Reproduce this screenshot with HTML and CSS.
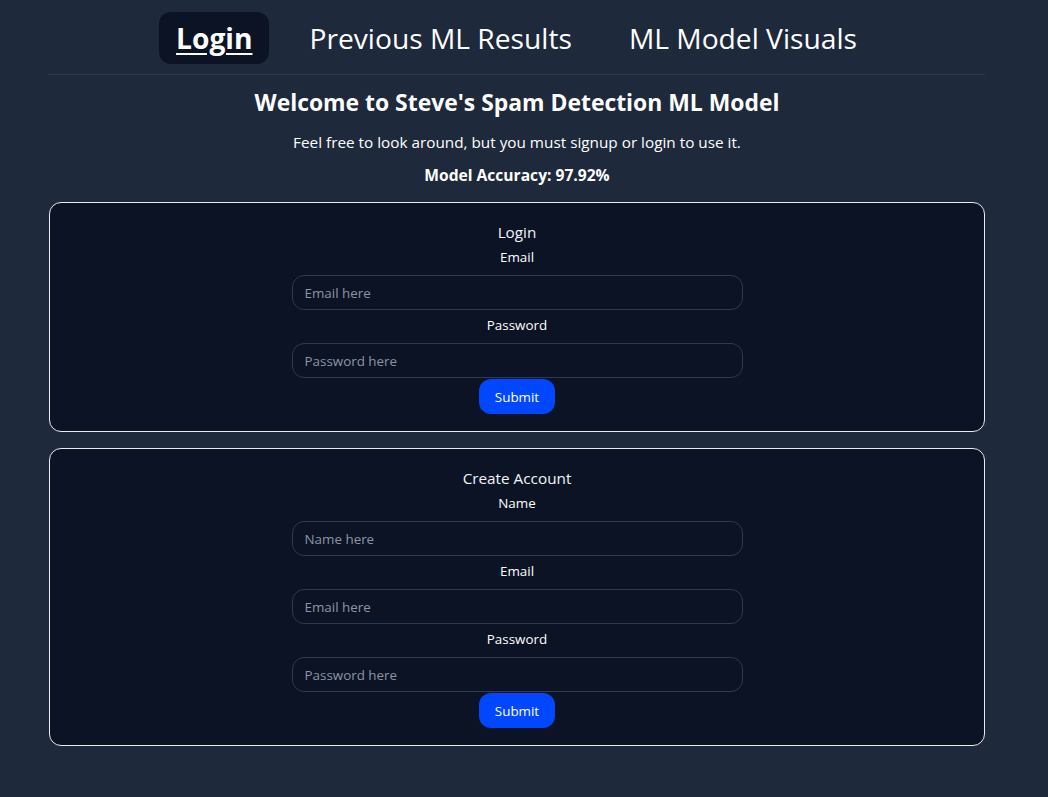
FILE: index.html
```html
<!DOCTYPE html>
<html lang="en">
<head>
<meta charset="utf-8">
<title>Steve's Spam Detection ML Model</title>
<link rel="stylesheet" href="styles.css">
</head>
<body>
<div class="page">
  <nav class="nav">
    <a class="nav-item active" href="#">Login</a>
    <a class="nav-item" href="#">Previous ML Results</a>
    <a class="nav-item" href="#">ML Model Visuals</a>
  </nav>
  <header class="intro">
    <h1 class="title">Welcome to Steve's Spam Detection ML Model</h1>
    <p class="subtitle">Feel free to look around, but you must signup or login to use it.</p>
    <p class="accuracy">Model Accuracy: 97.92%</p>
  </header>
  <section class="card">
    <h2 class="card-title">Login</h2>
    <div class="field">
      <label class="label">Email</label>
      <input class="input" type="text" placeholder="Email here">
    </div>
    <div class="field">
      <label class="label">Password</label>
      <input class="input" type="password" placeholder="Password here">
    </div>
    <button class="submit">Submit</button>
  </section>
  <section class="card">
    <h2 class="card-title">Create Account</h2>
    <div class="field">
      <label class="label">Name</label>
      <input class="input" type="text" placeholder="Name here">
    </div>
    <div class="field">
      <label class="label">Email</label>
      <input class="input" type="text" placeholder="Email here">
    </div>
    <div class="field">
      <label class="label">Password</label>
      <input class="input" type="password" placeholder="Password here">
    </div>
    <button class="submit">Submit</button>
  </section>
</div>
</body>
</html>
```
FILE: styles.css
```css
html, body {
  margin: 0;
  padding: 0;
}
body {
  background: #1e293b;
  color: #ffffff;
  font-family: "Open Sans", "Noto Sans", sans-serif;
}
.page {
  margin: 0 63px 0 49px;
}
.nav {
  display: flex;
  justify-content: center;
  gap: 23px;
  margin-left: -1px;
  padding: 12px 0 10px;
  border-bottom: 1px solid #2b3850;
}
.nav-item {
  display: block;
  padding: 8px 17px;
  font-size: 28.2px;
  line-height: 36px;
  color: #ffffff;
  text-decoration: none;
  border-radius: 12px;
}
.nav-item.active {
  background: #0c1324;
  font-weight: 700;
  text-decoration: underline;
  text-underline-offset: 4px;
  text-decoration-thickness: 2px;
}
.intro {
  text-align: center;
}
.title {
  margin: 12px 0 0;
  font-size: 22.9px;
  line-height: 32px;
  font-weight: 700;
}
.subtitle {
  margin: 11px 0 0;
  font-size: 15.3px;
  line-height: 24px;
}
.accuracy {
  margin: 9px 0 0;
  font-size: 15.6px;
  line-height: 24px;
  font-weight: 700;
}
.card {
  margin-top: 15px;
  background: #0c1324;
  border: 1px solid #e8ebf0;
  border-radius: 12px;
  padding: 17px 0 17px;
  display: flex;
  flex-direction: column;
  align-items: center;
}
.card + .card {
  margin-top: 16px;
}
.card-title {
  margin: 0 0 3px;
  font-size: 15.3px;
  line-height: 24px;
  font-weight: 400;
  color: #f1f5f9;
}
.field {
  display: flex;
  flex-direction: column;
  align-items: center;
}
.field + .field {
  margin-top: 5px;
}
.label {
  font-size: 13.4px;
  line-height: 20px;
  margin-bottom: 8px;
  color: #ffffff;
}
.input {
  box-sizing: border-box;
  width: 451px;
  height: 35px;
  padding: 0 12px;
  background: #0c1324;
  border: 1px solid #2c3a52;
  border-radius: 12px;
  color: #ffffff;
  font-family: inherit;
  font-size: 13.4px;
  outline: none;
}
.input::placeholder {
  color: #8b95a7;
}
.submit {
  margin-top: 1px;
  width: 76px;
  height: 35px;
  border: none;
  border-radius: 12px;
  background: #0047ff;
  color: #ffffff;
  font-family: inherit;
  font-size: 13.4px;
  cursor: pointer;
}
```
